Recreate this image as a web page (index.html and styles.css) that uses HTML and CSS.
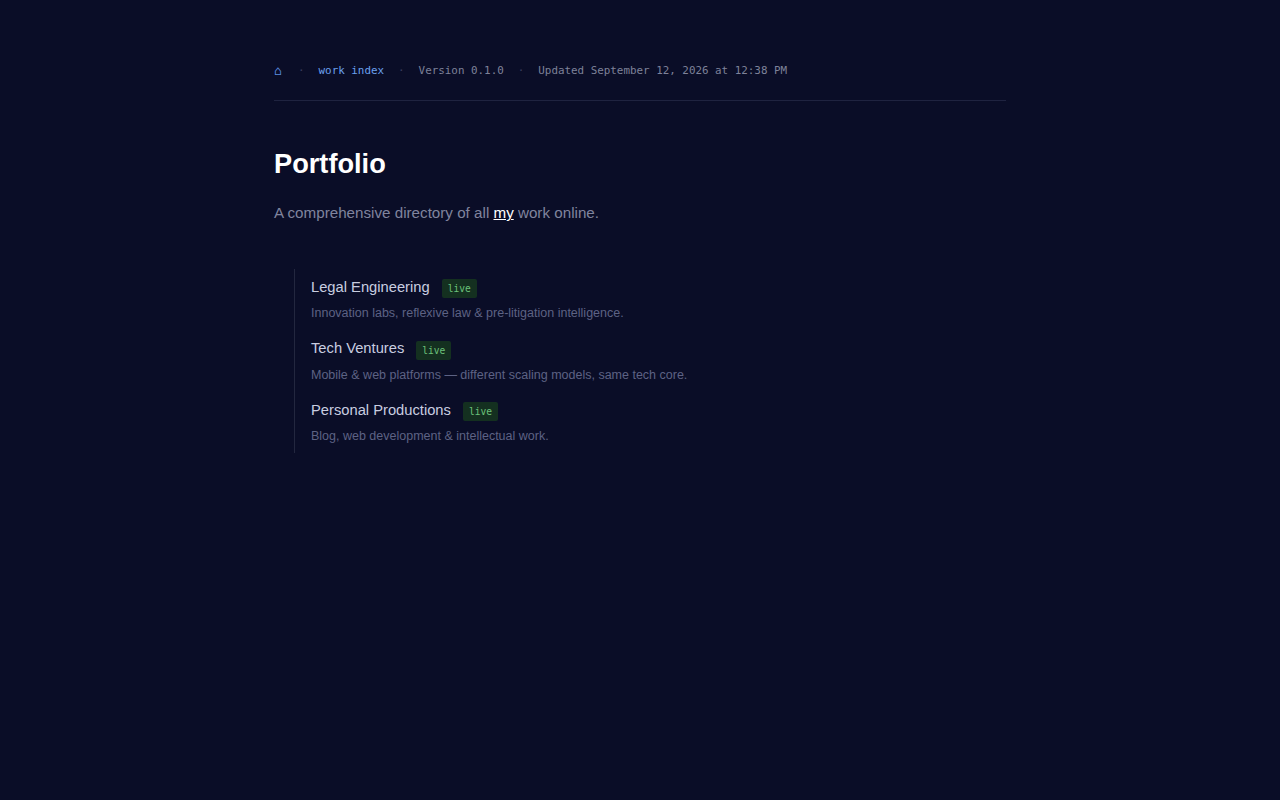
FILE: index.html
```html
<!DOCTYPE html>
<html lang="en">
<head>
<meta charset="utf-8">
<title>Portfolio</title>
<link rel="stylesheet" href="styles.css">
</head>
<body>
<div class="page">
  <nav class="meta">
    <a class="home" href="#">⌂</a>
    <span class="sep">·</span>
    <a class="crumb" href="#">work index</a>
    <span class="sep">·</span>
    <span class="info">Version 0.1.0</span>
    <span class="sep">·</span>
    <span class="info">Updated September 12, 2026 at 12:38 PM</span>
  </nav>
  <h1 class="title">Portfolio</h1>
  <p class="lead">A comprehensive directory of all <a class="me" href="#">my</a> work online.</p>
  <ul class="list">
    <li class="item">
      <div class="item-head"><span class="item-name">Legal Engineering</span><span class="badge">live</span></div>
      <p class="item-desc">Innovation labs, reflexive law &amp; pre-litigation intelligence.</p>
    </li>
    <li class="item">
      <div class="item-head"><span class="item-name">Tech Ventures</span><span class="badge">live</span></div>
      <p class="item-desc">Mobile &amp; web platforms — different scaling models, same tech core.</p>
    </li>
    <li class="item">
      <div class="item-head"><span class="item-name">Personal Productions</span><span class="badge">live</span></div>
      <p class="item-desc">Blog, web development &amp; intellectual work.</p>
    </li>
  </ul>
</div>
</body>
</html>
```

FILE: styles.css
```css
html, body {
  margin: 0;
  padding: 0;
  background: #0a0d27;
}
body {
  font-family: "Liberation Sans", Arial, sans-serif;
  color: #c9cde0;
}
.page {
  max-width: 732px;
  margin: 0 auto;
  padding: 63px 24px 40px;
}
.meta {
  display: flex;
  align-items: center;
  gap: 14px;
  font-family: "DejaVu Sans Mono", monospace;
  font-size: 10.88px;
  line-height: 16px;
  padding-bottom: 21px;
  border-bottom: 1px solid #1f2340;
}
.meta a { text-decoration: none; }
.home { color: #5b8ee0; font-size: 13px; width: 10px; }
.crumb { color: #6aa0ee; }
.sep { color: #3a3f5e; }
.info { color: #7e8299; }
.title {
  margin: 47px 0 0;
  font-size: 27.2px;
  line-height: 32px;
  font-weight: 700;
  color: #ffffff;
}
.lead {
  margin: 23px 0 0;
  font-size: 15.2px;
  line-height: 20px;
  color: #80849e;
}
.me {
  color: #ffffff;
  text-decoration: underline;
}
.list {
  list-style: none;
  margin: 46px 0 0 20px;
  padding: 9px 0 8px 16px;
  border-left: 1px solid #23273f;
  display: flex;
  flex-direction: column;
  gap: 17.5px;
}
.item-head {
  display: flex;
  align-items: center;
  gap: 12px;
  height: 22px;
}
.item-name {
  font-size: 14.72px;
  color: #c9cde0;
  margin-top: -5px;
}
.badge {
  font-family: "DejaVu Sans Mono", monospace;
  font-size: 9.6px;
  line-height: 13px;
  padding: 3px 6px;
  border-radius: 2px;
  background: #143020;
  color: #6cc27a;
  margin-top: -1px;
}
.item-desc {
  margin: 4px 0 0;
  font-size: 12.5px;
  line-height: 18px;
  color: #5d6284;
}
```
